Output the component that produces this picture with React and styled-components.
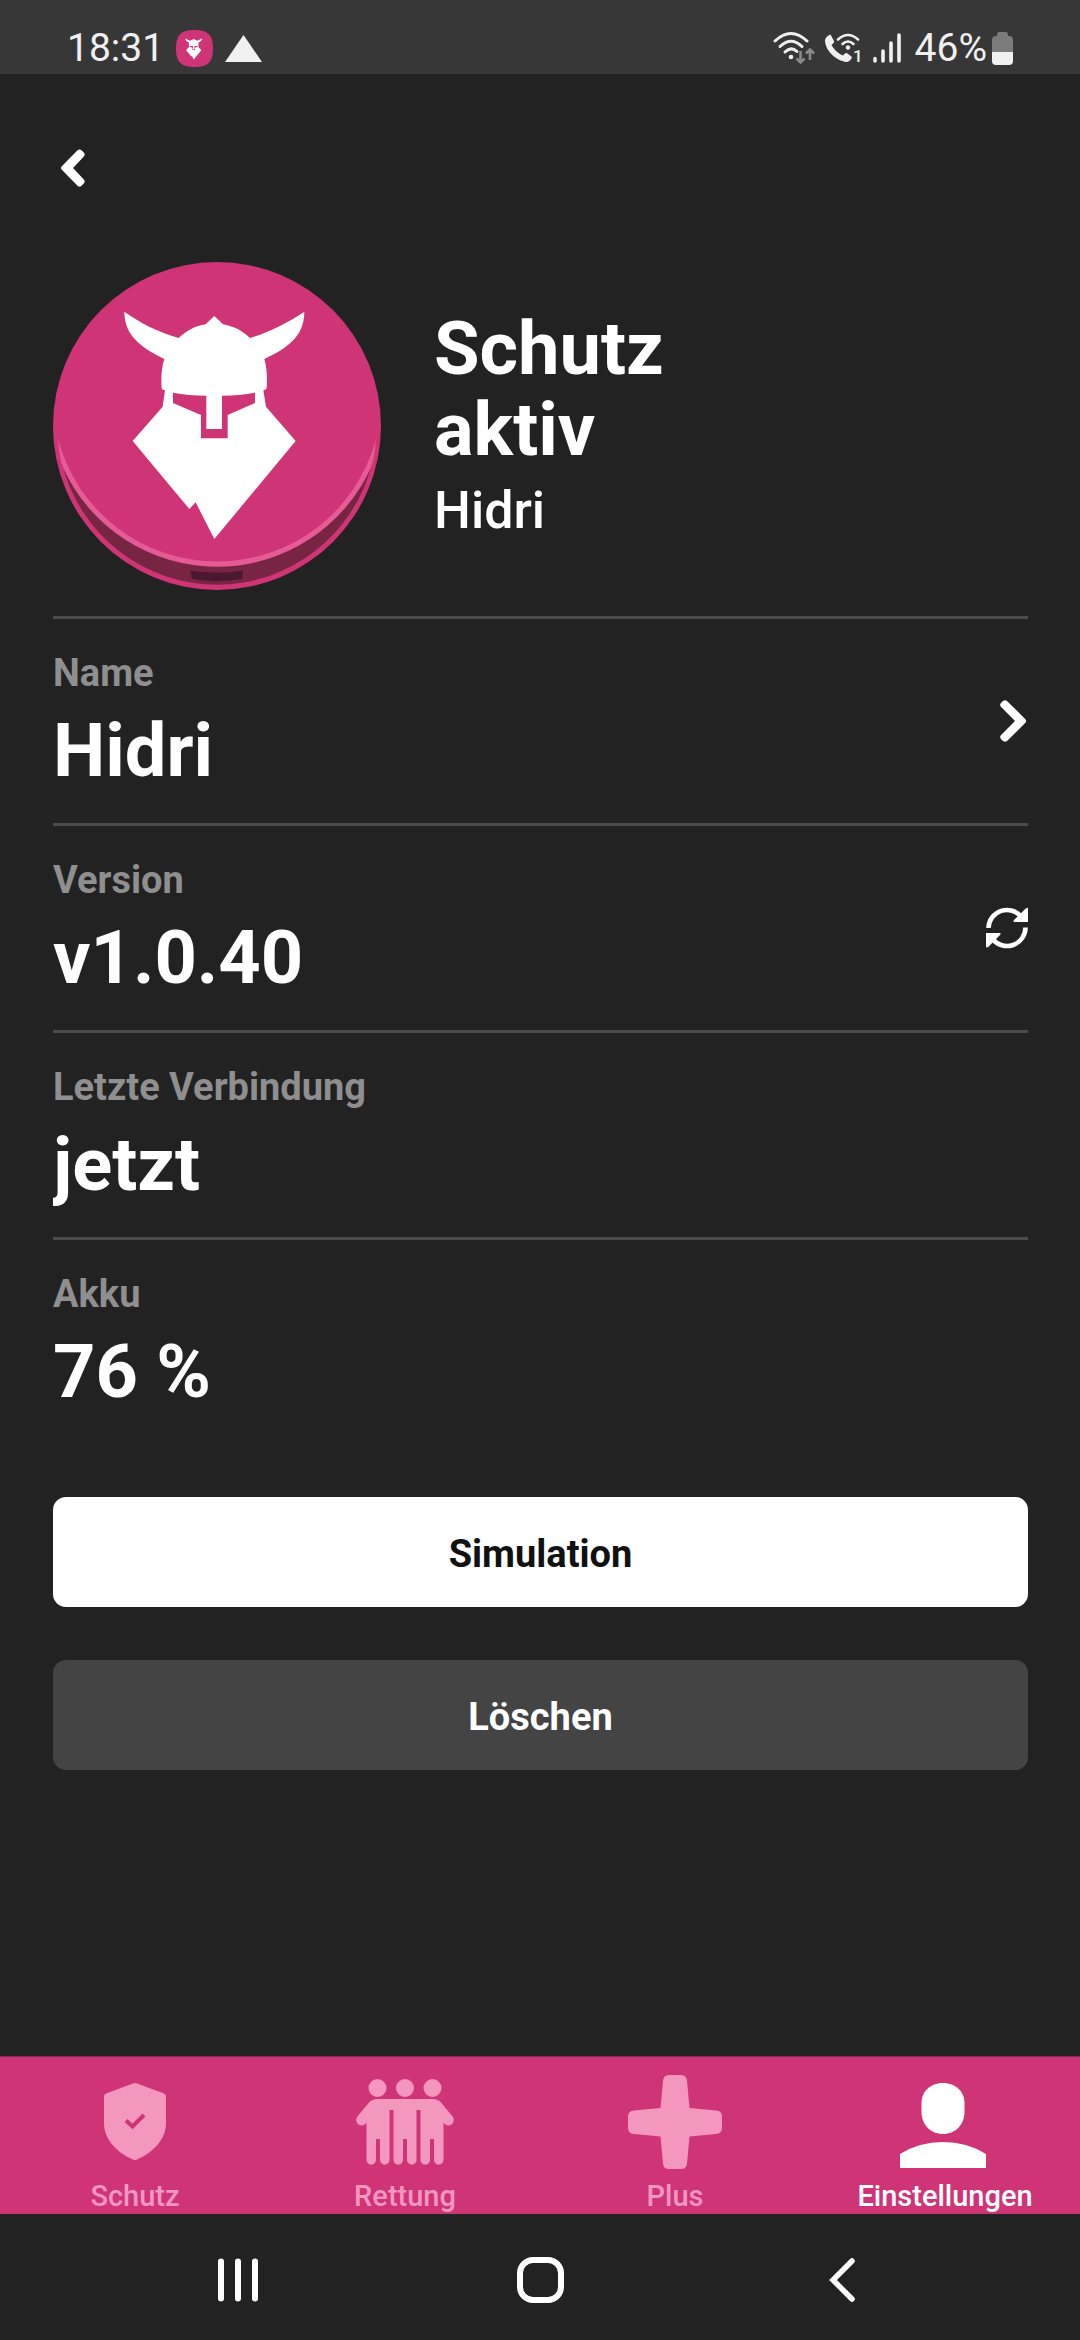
import React from 'react';
import styled, { createGlobalStyle } from 'styled-components';

const GlobalStyle = createGlobalStyle`
  * {
    box-sizing: border-box;
  }

  body {
    margin: 0;
    background: #222222;
    color: #ffffff;
    font-family: Roboto, 'Liberation Sans', sans-serif;
  }

  button {
    margin: 0;
    padding: 0;
    border: 0;
    background: none;
    color: inherit;
    font: inherit;
    cursor: pointer;
  }

  svg {
    display: block;
  }
`;

const Screen = styled.div`
  display: flex;
  flex-direction: column;
  min-height: 100vh;
`;

const StatusBar = styled.header`
  display: flex;
  justify-content: space-between;
  align-items: center;
  height: 74px;
  padding: 22px 67px 0;
  background: #373737;
  color: #f0f0f0;
  font-size: 39px;
  line-height: 48px;
`;

const StatusGroup = styled.div`
  display: flex;
  align-items: center;
  gap: ${({ $gap }) => $gap}px;
`;

const Content = styled.main`
  flex: 1;
  padding: 0 52px 0 53px;
`;

const BackButton = styled.button`
  display: flex;
  align-items: center;
  width: 60px;
  height: 60px;
  margin: 64px 0;
  padding-left: 8px;
`;

const Hero = styled.section`
  display: flex;
  align-items: center;
  gap: 53px;
  padding-bottom: 26px;
`;

const HeroTitle = styled.h1`
  margin: 0;
  font-size: 74px;
  font-weight: 700;
  line-height: 81px;
`;

const HeroName = styled.p`
  margin: 8px 0 0;
  font-size: 52px;
  font-weight: 500;
  line-height: 66px;
`;

const Row = styled.section`
  display: flex;
  justify-content: space-between;
  align-items: center;
  padding: 32px 0 29px;
  border-top: 3px solid #4a4a4a;
`;

const RowLabel = styled.h2`
  margin: 0 0 13px;
  color: #8f8f8f;
  font-size: 38px;
  font-weight: 700;
  line-height: 44px;
`;

const RowValue = styled.p`
  margin: 0;
  overflow: hidden;
  font-size: 74px;
  font-weight: 700;
  line-height: 86px;
`;

const RowButton = styled.button`
  padding-bottom: 4px;
`;

const Actions = styled.div`
  display: flex;
  flex-direction: column;
  gap: 53px;
  padding: 53px 0;
`;

const ActionButton = styled.button`
  height: 110px;
  padding-top: 4px;
  border-radius: 13px;
  background: ${({ $primary }) => ($primary ? '#ffffff' : '#444444')};
  color: ${({ $primary }) => ($primary ? '#111111' : '#ffffff')};
  font-size: 38px;
  font-weight: 700;
`;

const TabBar = styled.nav`
  display: grid;
  grid-template-columns: repeat(4, 1fr);
  border-top: 1px solid #8a2b55;
  background: #cf3476;
`;

const Tab = styled.a`
  display: flex;
  flex-direction: column;
  align-items: center;
  gap: 11px;
  padding: 18px 0 2px;
  color: ${({ $active }) => ($active ? '#ffffff' : '#f497bf')};
  font-size: 29px;
  font-weight: 500;
  line-height: 32px;
  text-decoration: none;
`;

const SystemNav = styled.nav`
  display: grid;
  grid-template-columns: repeat(3, 1fr);
  height: 126px;
  padding: 6px 8% 0;
`;

const SystemButton = styled.button`
  display: flex;
  justify-content: center;
  align-items: center;
`;

const Viking = () => (
  <>
    <path
      fill="#ffffff"
      d="M253 185C300 218 350 245 416 264C440 242 465 228 497 223L523 198L549 223C585 230 608 243 630 264C690 245 740 220 793 185C793 260 740 295 673 327C681 355 682 385 680 415Q676 421 670 421L678 470L767 573L523 867L467 757L448 777L278 573L368 470L375 421Q366 421 365 415C363 385 364 355 373 327C310 295 253 260 253 185Z"
    />
    <path
      fill="#cf3476"
      d="M399 428Q445 437 499 437V537H546V437Q600 437 645 428V459L563 495V565H483V495L399 459Z"
    />
  </>
);

const DeviceImage = () => (
  <svg width="328" height="328" viewBox="39 36 984 984" aria-hidden="true">
    <circle cx="531" cy="528" r="492" fill="#cf3476" />
    <path fill="#772543" d="M66 640A479 479 0 0 0 996 640Z" />
    <path fill="#4a1830" d="M452 962Q531 973 609 962L607 987Q531 1000 456 987Z" />
    <path
      fill="#e65b95"
      d="M55 570Q56 612 68 650A507 507 0 0 0 994 650Q1006 612 1007 570Z"
    />
    <path fill="#cf3476" d="M55 570A493 493 0 0 0 1007 570V560H55Z" />
    <Viking />
  </svg>
);

const AppBadge = () => (
  <svg width="37" height="37" viewBox="0 0 37 37" aria-hidden="true">
    <path
      fill="#cf3476"
      d="M18.500 0C32 0 37 5 37 18.500S32 37 18.500 37S0 32 0 18.500S5 0 18.500 0Z"
    />
    <g transform="translate(1.500 2.500) scale(0.031)">
      <Viking />
    </g>
  </svg>
);

const Triangle = () => (
  <svg width="37" height="27" viewBox="0 0 37 27" aria-hidden="true">
    <path fill="#f0f0f0" d="M18.500 0L37 27H0Z" />
  </svg>
);

const Wifi = () => (
  <svg width="42" height="34" viewBox="0 0 42 34" fill="none" aria-hidden="true">
    <g stroke="#f0f0f0" strokeWidth="3" strokeLinecap="round">
      <path d="M2 10Q18 -5 34 10" />
      <path d="M7 15.500Q18 5 29 15.500" />
      <path d="M12 21Q18 15 24 20.500" />
    </g>
    <circle cx="18" cy="26" r="2.300" fill="#f0f0f0" />
    <path
      d="M27.500 20V31M23.500 27.500L27.500 31.500L31.500 27.500M37 29V19M33 22.500L37 18.500L41 22.500"
      stroke="#8b8b8b"
      strokeWidth="2.600"
    />
  </svg>
);

const WifiCall = () => (
  <svg width="38" height="37" viewBox="0 -3 38 37" fill="none" aria-hidden="true">
    <path
      fill="#f0f0f0"
      d="M5.500 1.500L9 8Q9.500 9.500 8 10.500L6.500 12Q10 19 18 22.500L20 20.500Q21 19.500 22.500 20.500L27 24Q26 28 22 29C15 29 0 20 0 7Q1 3 5.500 1.500Z"
    />
    <g stroke="#f0f0f0" strokeWidth="2.600" strokeLinecap="round">
      <path d="M13 6.500Q23 -2.500 33 6.500" />
      <path d="M17.500 11Q23 6 28.500 11" />
    </g>
    <circle cx="23" cy="14.500" r="2.200" fill="#f0f0f0" />
    <text
      x="28"
      y="29"
      fill="#f0f0f0"
      fontSize="17"
      fontWeight="500"
      fontFamily="Roboto, sans-serif"
    >
      1
    </text>
  </svg>
);

const Signal = () => (
  <svg width="28" height="30" viewBox="0 0 28 30" aria-hidden="true">
    <g stroke="#f0f0f0" strokeWidth="3.600" strokeLinecap="round">
      <path d="M2 25.500V28M10 18V28M18 10V28M26 2V28" />
    </g>
  </svg>
);

const Battery = () => (
  <svg width="21" height="33" viewBox="0 0 21 33" aria-hidden="true">
    <path fill="#7b7b7b" d="M7 0H14Q16 0 16 4H17Q21 4 21 8V20H0V8Q0 4 4 4H5Q5 0 7 0Z" />
    <path fill="#f0f0f0" d="M0 20H21V29Q21 33 17 33H4Q0 33 0 29Z" />
  </svg>
);

const ChevronLeft = () => (
  <svg width="24" height="38" viewBox="0 0 24 38" aria-hidden="true">
    <path
      fill="#ffffff"
      d="M0.600 17.400L16.500 1.300Q18.500 -0.400 20.500 1.300L22.800 3.600Q24.500 5.500 22.800 7.500L12 19L22.800 30.500Q24.500 32.500 22.800 34.400L20.500 36.700Q18.500 38.400 16.500 36.700L0.600 20.600Q-0.600 19 0.600 17.400Z"
    />
  </svg>
);

const ChevronRight = () => (
  <svg width="28" height="42" viewBox="0 0 28 42" aria-hidden="true">
    <path
      fill="#ffffff"
      d="M25.400 19.200L7 0.900Q5 -0.600 3 0.900L0.900 3Q-0.600 5 0.900 6.800L15 21L0.900 35.200Q-0.600 37 0.900 39L3 41.100Q5 42.600 7 41.100L25.400 22.800Q26.800 21 25.400 19.200Z"
    />
  </svg>
);

const Refresh = () => (
  <svg width="42" height="42" viewBox="0 0 42 42" fill="none" aria-hidden="true">
    <path d="M2.500 21A18.500 18.500 0 0 1 35.500 10" stroke="#ffffff" strokeWidth="4.600" />
    <path d="M39.500 20.500A18.500 18.500 0 0 1 6.500 32" stroke="#ffffff" strokeWidth="4.600" />
    <path fill="#ffffff" d="M42 1.500V15H28.500Q26.500 15 28 13L39.500 1.700Q41.500 0 42 1.500Z" />
    <path fill="#ffffff" d="M0 39.500V26H13.500Q15.500 26 14 28L2.500 39.800Q0.500 41.500 0 39.500Z" />
  </svg>
);

const ShieldIcon = () => (
  <svg width="100" height="94" viewBox="0 0 100 94" fill="none" aria-hidden="true">
    <path
      fill="currentColor"
      d="M48 8.500Q50 7.500 52 8.500L79 18.500Q81 19.500 81 21V48C81 64 69 77 52 84.500Q50 85.500 48 84.500C31 77 19 64 19 48V21Q19 19.500 21 18.500Z"
    />
    <path d="M41 45.500L47.500 51.500L59 40" stroke="#cf3476" strokeWidth="4" />
  </svg>
);

const PeopleIcon = () => (
  <svg width="100" height="94" viewBox="0 0 100 94" fill="currentColor" aria-hidden="true">
    <circle cx="22.500" cy="13" r="9" />
    <circle cx="50" cy="13" r="9" />
    <circle cx="77.500" cy="13" r="9" />
    <path d="M22 24H78Q83 24 86 27.500L98 42Q100 46 97 49Q93 52 90 49L88.500 47.500V85A4.700 4.700 0 0 1 79 85V64H75V85A4.700 4.700 0 0 1 65.500 85V35H61.500V85A4.700 4.700 0 0 1 52 85V64H48V85A4.700 4.700 0 0 1 38.500 85V35H34.500V85A4.700 4.700 0 0 1 25 85V64H21V85A4.700 4.700 0 0 1 11.500 85V47.500L10 49Q7 52 3 49Q0 46 2 42L14 27.500Q17 24 22 24Z" />
  </svg>
);

const PlusIcon = () => (
  <svg width="100" height="94" viewBox="0 0 100 94" fill="currentColor" aria-hidden="true">
    <path d="M44 0H56Q61.500 0 62 6L64.500 33L91 35.500Q97 36 97 41.500V53Q97 58.500 91 59L64.500 61.500L62 88.500Q61.500 94 56 94H44Q38.500 94 38 88.500L35.500 61.500L9 59Q3 58.500 3 53V41.500Q3 36 9 35.500L35.500 33L38 6Q38.500 0 44 0Z" />
  </svg>
);

const PersonIcon = () => (
  <svg width="100" height="94" viewBox="0 0 100 94" fill="currentColor" aria-hidden="true">
    <path d="M48 8C61 8 69.500 17 69.500 28V37C69.500 50 60 59 48 59S26.500 50 26.500 37V28C26.500 17 35 8 48 8Z" />
    <path d="M5 79Q24 67 48 67T91 79V93H5Z" />
  </svg>
);

const Recents = () => (
  <svg width="42" height="44" viewBox="0 0 42 44" aria-hidden="true">
    <path
      d="M4 3.500V40.500M21 3.500V40.500M38 3.500V40.500"
      stroke="#ffffff"
      strokeWidth="6"
      strokeLinecap="round"
    />
  </svg>
);

const Home = () => (
  <svg width="47" height="46" viewBox="0 0 47 46" fill="none" aria-hidden="true">
    <rect x="3" y="3" width="41" height="40" rx="13" stroke="#ffffff" strokeWidth="6" />
  </svg>
);

const Back = () => (
  <svg width="26" height="44" viewBox="0 0 26 44" fill="none" aria-hidden="true">
    <path d="M23 3L4 22L23 41" stroke="#ffffff" strokeWidth="5.500" strokeLinecap="round" />
  </svg>
);

const rows = [
  { label: 'Name', value: 'Hidri', action: 'Name ändern', icon: <ChevronRight /> },
  { label: 'Version', value: 'v1.0.40', action: 'Aktualisieren', icon: <Refresh /> },
  { label: 'Letzte Verbindung', value: 'jetzt' },
  { label: 'Akku', value: '76 %' },
];

const tabs = [
  { label: 'Schutz', icon: <ShieldIcon /> },
  { label: 'Rettung', icon: <PeopleIcon /> },
  { label: 'Plus', icon: <PlusIcon /> },
  { label: 'Einstellungen', icon: <PersonIcon />, active: true },
];

const App = () => {
  return (
    <Screen>
      <GlobalStyle />
      <StatusBar>
        <StatusGroup $gap={12}>
          <span>18:31</span>
          <AppBadge />
          <Triangle />
        </StatusGroup>
        <StatusGroup $gap={14}>
          <StatusGroup $gap={10}>
            <Wifi />
            <WifiCall />
            <Signal />
          </StatusGroup>
          <StatusGroup $gap={5}>
            <span>46%</span>
            <Battery />
          </StatusGroup>
        </StatusGroup>
      </StatusBar>
      <Content>
        <BackButton aria-label="Zurück">
          <ChevronLeft />
        </BackButton>
        <Hero>
          <DeviceImage />
          <div>
            <HeroTitle>
              Schutz
              <br />
              aktiv
            </HeroTitle>
            <HeroName>Hidri</HeroName>
          </div>
        </Hero>
        {rows.map((row) => (
          <Row key={row.label}>
            <div>
              <RowLabel>{row.label}</RowLabel>
              <RowValue>{row.value}</RowValue>
            </div>
            {row.icon && <RowButton aria-label={row.action}>{row.icon}</RowButton>}
          </Row>
        ))}
        <Actions>
          <ActionButton $primary>Simulation</ActionButton>
          <ActionButton>Löschen</ActionButton>
        </Actions>
      </Content>
      <TabBar>
        {tabs.map((tab) => (
          <Tab key={tab.label} href="#" $active={tab.active}>
            {tab.icon}
            {tab.label}
          </Tab>
        ))}
      </TabBar>
      <SystemNav>
        <SystemButton aria-label="Letzte Apps">
          <Recents />
        </SystemButton>
        <SystemButton aria-label="Startseite">
          <Home />
        </SystemButton>
        <SystemButton aria-label="Zurück">
          <Back />
        </SystemButton>
      </SystemNav>
    </Screen>
  );
};

export default App;
